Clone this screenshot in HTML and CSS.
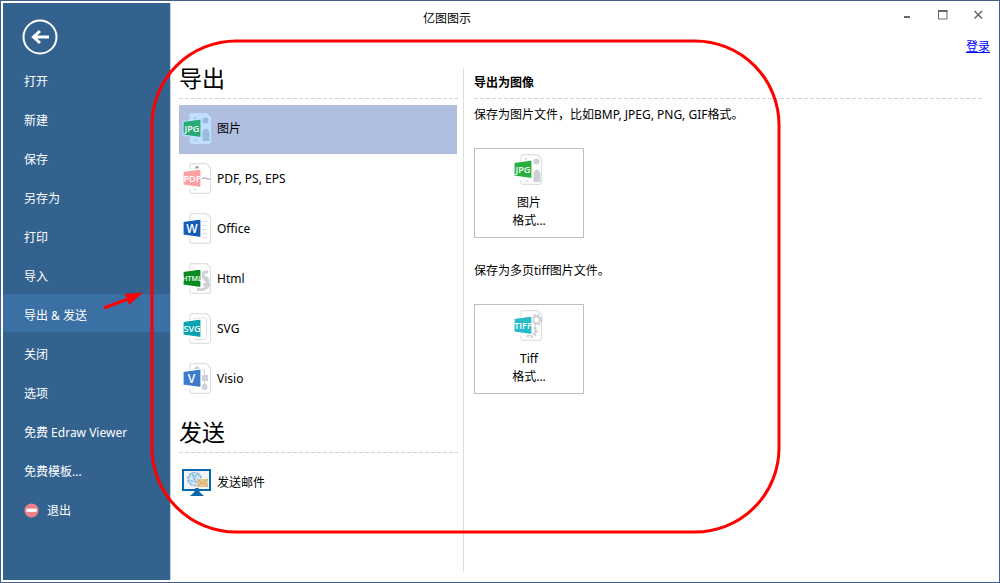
FILE: index.html
```html
<!DOCTYPE html>
<html lang="zh-CN">
<head>
<meta charset="utf-8">
<meta name="viewport" content="width=device-width, initial-scale=1">
<title>亿图图示</title>
<link rel="stylesheet" href="styles.css">
</head>
<body>
<svg class="defs" aria-hidden="true">
  <symbol id="page" viewBox="0 0 32 32">
    <path class="page" d="M8 7V2.500Q8 .7 9.800 .7H24.500L28.500 4.500V28.500Q28.500 30.300 26.700 30.300H9.800Q8 30.300 8 28.500V26"/>
  </symbol>
  <symbol id="tag" viewBox="0 0 32 32">
    <path d="M1 8.500L19 6V24.700L1 22.200Z"/>
  </symbol>
  <symbol id="picture" viewBox="0 0 32 32">
    <circle cx="23.500" cy="7.500" r="3"/>
    <circle cx="13" cy="5" r="1"/>
    <path d="M20.500 28V18.500Q23.500 13 26.500 17.500L27.500 20V28Z"/>
    <path d="M11.500 27.500L13.500 26L16 27.500Z"/>
  </symbol>
</svg>
<div class="window">
  <nav class="sidebar" aria-label="文件菜单">
    <button class="back" type="button" aria-label="返回">
      <svg viewBox="0 0 36 36"><circle cx="18" cy="18" r="16.500"/><path class="arrow" d="M27 18H12M18 12L11.500 18L18 24"/></svg>
    </button>
    <div class="menu">
      <button class="menu-item" type="button">打开</button>
      <button class="menu-item" type="button">新建</button>
      <button class="menu-item" type="button">保存</button>
      <button class="menu-item" type="button">另存为</button>
      <button class="menu-item" type="button">打印</button>
      <button class="menu-item" type="button">导入</button>
      <button class="menu-item active" type="button" aria-current="page">导出 &amp; 发送</button>
      <button class="menu-item" type="button">关闭</button>
      <button class="menu-item" type="button">选项</button>
      <button class="menu-item" type="button">免费 Edraw Viewer</button>
      <button class="menu-item" type="button">免费模板...</button>
      <button class="menu-item" type="button">
        <svg class="exit-icon" viewBox="0 0 16 16" aria-hidden="true"><circle cx="8" cy="8" r="7.500" fill="#ee7f89"/><rect x="2.500" y="6" width="11" height="3.500" fill="#fff"/></svg>退出</button>
    </div>
  </nav>

  <div class="main">
    <header class="titlebar">
      <h1 class="title">亿图图示</h1>
      <div class="controls">
        <button type="button" aria-label="最小化"><svg viewBox="0 0 12 12"><path d="M3 8H9" stroke-width="2"/></svg></button>
        <button type="button" aria-label="最大化"><svg viewBox="0 0 12 12"><path d="M1.500 2V10H10V2" fill="none"/><path d="M1 2H10.500" stroke-width="2"/></svg></button>
        <button type="button" aria-label="关闭窗口"><svg viewBox="0 0 12 12"><path d="M1.500 2L9 9.500M9 2L1.500 9.500" stroke-width="1.500"/></svg></button>
      </div>
    </header>
    <div class="account"><a href="#login">登录</a></div>

    <div class="content">
      <div class="options">
        <section>
          <h2 class="heading dashed">导出</h2>
          <div class="list">
            <button class="option selected" type="button">
              <svg class="icon jpg-selected" viewBox="0 0 32 32" aria-hidden="true"><use href="#page"/><use class="art" href="#picture"/><use class="tag" href="#tag"/><text x="10" y="18.500" font-size="9">JPG</text></svg>图片</button>
            <button class="option" type="button">
              <svg class="icon pdf" viewBox="0 0 32 32" aria-hidden="true"><use href="#page"/><path class="line" d="M13.500 6L15 3L16.500 6M13 5L15.500 3.500L17 5M20 16C23 13 25 17 28 16M12.500 26L13.500 27"/><use class="tag" href="#tag"/><text x="10" y="19" font-size="9">PDF</text></svg>PDF, PS, EPS</button>
            <button class="option" type="button">
              <svg class="icon word" viewBox="0 0 32 32" aria-hidden="true"><use href="#page"/><path class="rule" d="M20 8.500H25M20 12.500H25M20 16.500H25M20 20.500H25M20 24.500H25"/><use class="tag" href="#tag"/><text x="10" y="19.500" font-size="12">W</text></svg>Office</button>
            <button class="option" type="button">
              <svg class="icon html" viewBox="0 0 32 32" aria-hidden="true"><use href="#page"/><path class="curve" d="M26 9C19 8 20 14 25 18C29 23 23 28 15 26"/><path class="curve" d="M23 14C28 17 26 22 21 22"/><use class="tag" href="#tag"/><text x="10" y="18" font-size="7">HTML</text></svg>Html</button>
            <button class="option" type="button">
              <svg class="icon vector" viewBox="0 0 32 32" aria-hidden="true"><use href="#page"/><rect class="inner" x="12" y="5" width="12.500" height="21.500" rx="2"/><use class="tag" href="#tag"/><text x="10" y="18.500" font-size="9">SVG</text></svg>SVG</button>
            <button class="option" type="button">
              <svg class="icon visio" viewBox="0 0 32 32" aria-hidden="true"><use href="#page"/><path class="wire" d="M14.500 7H22.500V24M14.500 7V9"/><path class="art" d="M11.500 6L15 2.500L18.500 6ZM20 12H26V18H20Z"/><circle class="art" cx="22.500" cy="24" r="3"/><use class="tag" href="#tag"/><text x="9.500" y="19.500" font-size="12">V</text></svg>Visio</button>
          </div>
        </section>
        <section class="send">
          <h2 class="heading dashed">发送</h2>
          <div class="list">
            <button class="option" type="button">
              <svg class="icon" viewBox="0 0 32 32" aria-hidden="true">
                <path d="M0 2H29V24H0Z" fill="#0769ac"/><path d="M2 4H27V22H2Z" fill="#f1f2f4"/>
                <circle cx="12.500" cy="12" r="6" fill="#d3e8f6"/>
                <circle cx="12.500" cy="12" r="6.500" fill="none" stroke="#7db7df" stroke-width="1.500" stroke-dasharray="3 1"/>
                <path d="M7 9L18 8M6 13L15 15M10 6L15 17M16 6L8 17" fill="none" stroke="#7db7df" stroke-width="1.200" stroke-dasharray="2 1"/>
                <path d="M15 12H26V20H15Z" fill="#e7c68f"/><path d="M15 12L20.500 16.500L26 12M15 20L19 16M26 20L22 16" fill="none" stroke="#c9a269" stroke-width=".8"/>
                <path d="M12.500 22L14 21H16L17.500 22V25L22 29H8L12.500 25Z" fill="#0769ac"/>
              </svg>发送邮件</button>
          </div>
        </section>
      </div>

      <section class="details">
        <h2 class="subheading dashed">导出为图像</h2>
        <p class="note">保存为图片文件，比如BMP, JPEG, PNG, GIF格式。</p>
        <button class="tile" type="button">
          <svg class="icon jpg" viewBox="0 0 32 32" aria-hidden="true"><use href="#page"/><use class="art" href="#picture"/><use class="tag" href="#tag"/><text x="10" y="18.500" font-size="9">JPG</text></svg>
          <span>图片<br>格式...</span>
        </button>
        <p class="note second">保存为多页tiff图片文件。</p>
        <button class="tile" type="button">
          <svg class="icon tiff" viewBox="0 0 32 32" aria-hidden="true"><use href="#page"/><circle class="gear" cx="23.500" cy="10" r="3.500"/><circle class="teeth" cx="23.500" cy="10" r="5"/><path class="gear" d="M21 17Q25 23 19 25Q15 26 13 23"/><path class="teeth" d="M22 17Q27 24 19 27Q14 27 12 25"/><use class="tag" href="#tag"/><text x="10" y="18.500" font-size="9">TIFF</text></svg>
          <span>Tiff<br>格式...</span>
        </button>
      </section>
    </div>
  </div>

  <svg class="annotation" viewBox="0 0 1000 583" aria-hidden="true">
    <rect x="152" y="41" width="627" height="491" rx="84" fill="none" stroke="#f00" stroke-width="3"/>
    <path d="M105 307.500L128 299" stroke="#f00" stroke-width="3" stroke-linecap="round"/>
    <path d="M143 292.500L124 294L127.500 298.500L129 305Z" fill="#f00"/>
  </svg>
</div>
</body>
</html>
```
FILE: styles.css
```css
* {
  box-sizing: border-box;
}

body {
  margin: 0;
  font: 12px/18px "Noto Sans", "Noto Sans CJK SC", sans-serif;
  color: #000;
  background: #fff;
}

button {
  margin: 0;
  padding: 0;
  border: 0;
  background: none;
  font: inherit;
  color: inherit;
  cursor: pointer;
}

h1,
h2,
p {
  margin: 0;
}

.defs {
  position: absolute;
  width: 0;
  height: 0;
}

.window {
  position: relative;
  display: flex;
  min-height: 100vh;
  padding: 2px;
  border: 1px solid #41618a;
}

/* Sidebar */

.sidebar {
  flex: none;
  width: 167px;
  padding-top: 16px;
  background: #33628f;
  color: #fff;
}

.back {
  display: block;
  width: 36px;
  height: 36px;
  margin-left: 19px;
}

.back svg {
  display: block;
  fill: none;
  stroke: #fff;
  stroke-width: 2;
}

.back .arrow {
  stroke-width: 3;
}

.menu {
  display: grid;
  gap: 1px;
  padding-top: 5px;
}

.menu-item {
  display: flex;
  align-items: center;
  gap: 8px;
  height: 38px;
  padding: 6px 0 0 21px;
  text-align: left;
}

.menu-item.active {
  background: #3b70a5;
}

.exit-icon {
  width: 15px;
  height: 15px;
  margin-bottom: 2px;
}

/* Title bar */

.main {
  flex: 1;
  display: flex;
  flex-direction: column;
  min-width: 0;
  border-left: 1px solid #c3d2e4;
}

.titlebar {
  display: flex;
  align-items: center;
  justify-content: space-between;
  height: 28px;
  padding: 0 12px 0 252px;
}

.title {
  padding-top: 4px;
  font-size: 12px;
  font-weight: 400;
  line-height: 18px;
}

.controls {
  display: flex;
  gap: 24px;
  padding-bottom: 4px;
}

.controls svg {
  display: block;
  width: 12px;
  height: 12px;
  stroke: #666;
}

.account {
  height: 29px;
  padding: 7px 7px 0 0;
  text-align: right;
}

.account a {
  color: #00f;
}

/* Content */

.content {
  flex: 1;
  display: flex;
  padding: 0 14px 8px 8px;
}

.options {
  flex: none;
  width: 279px;
}

.dashed {
  background: repeating-linear-gradient(90deg, #d4d4d4 0 4px, transparent 4px 6px) bottom / 100% 1px no-repeat;
}

.heading {
  height: 39px;
  font-size: 23px;
  font-weight: 400;
  line-height: 36px;
}

.list {
  display: grid;
  gap: 1px;
  padding: 6px 1px 0 0;
}

.option {
  display: flex;
  align-items: center;
  gap: 3px;
  height: 49px;
  padding: 0 0 1px 3px;
  text-align: left;
}

.option.selected {
  background: #b0bee0;
}

.send {
  padding-top: 10px;
}

.details {
  flex: 1;
  margin: 8px 0 0 5px;
  padding-left: 10px;
  border-left: 1px solid #dcdcdc;
}

.subheading {
  height: 31px;
  font-size: 12px;
  font-weight: 700;
  line-height: 30px;
}

.note {
  padding: 7px 0 24px;
}

.note.second {
  padding-top: 24px;
}

.tile {
  display: flex;
  flex-direction: column;
  align-items: center;
  gap: 8px;
  width: 110px;
  height: 90px;
  padding-top: 5px;
  border: 1px solid #bfbfbf;
  background: #fff;
}

/* File type icons */

.icon {
  flex: none;
  width: 32px;
  height: 32px;
  fill: #cdd0d4;
  --page: #fff;
  --edge: #dedfe0;
}

.icon text {
  fill: #fff;
  font-family: "Open Sans", sans-serif;
  font-weight: 600;
  text-anchor: middle;
}

.page {
  fill: var(--page);
  stroke: var(--edge);
  stroke-width: 1.2;
}

.tag {
  fill: var(--tag);
  stroke: var(--page);
  stroke-width: 1.2;
}

.jpg {
  --tag: #27b040;
}

.jpg-selected {
  --tag: #27aa75;
  --page: #bfdfff;
  --edge: #bfdfff;
  fill: #99bbdd;
}

.pdf {
  --tag: #fba0a2;
}

.word {
  --tag: #145cb8;
}

.html {
  --tag: #088c20;
}

.vector {
  --tag: #07a2ae;
}

.visio {
  --tag: #3d7ccc;
}

.tiff {
  --tag: #29bbc9;
}

.line,
.rule,
.curve,
.inner,
.wire,
.gear,
.teeth {
  fill: none;
  stroke: #cdd0d4;
}

.line {
  stroke: #999;
}

.rule,
.inner {
  stroke: #dedfe0;
}

.curve {
  stroke-width: 3;
}

.gear {
  stroke-width: 2;
}

.teeth {
  stroke-width: 2;
  stroke-dasharray: 2 2;
}

/* Highlight drawn over the window */

.annotation {
  position: absolute;
  top: -1px;
  left: -1px;
  width: 1000px;
  height: 583px;
  pointer-events: none;
}
```
